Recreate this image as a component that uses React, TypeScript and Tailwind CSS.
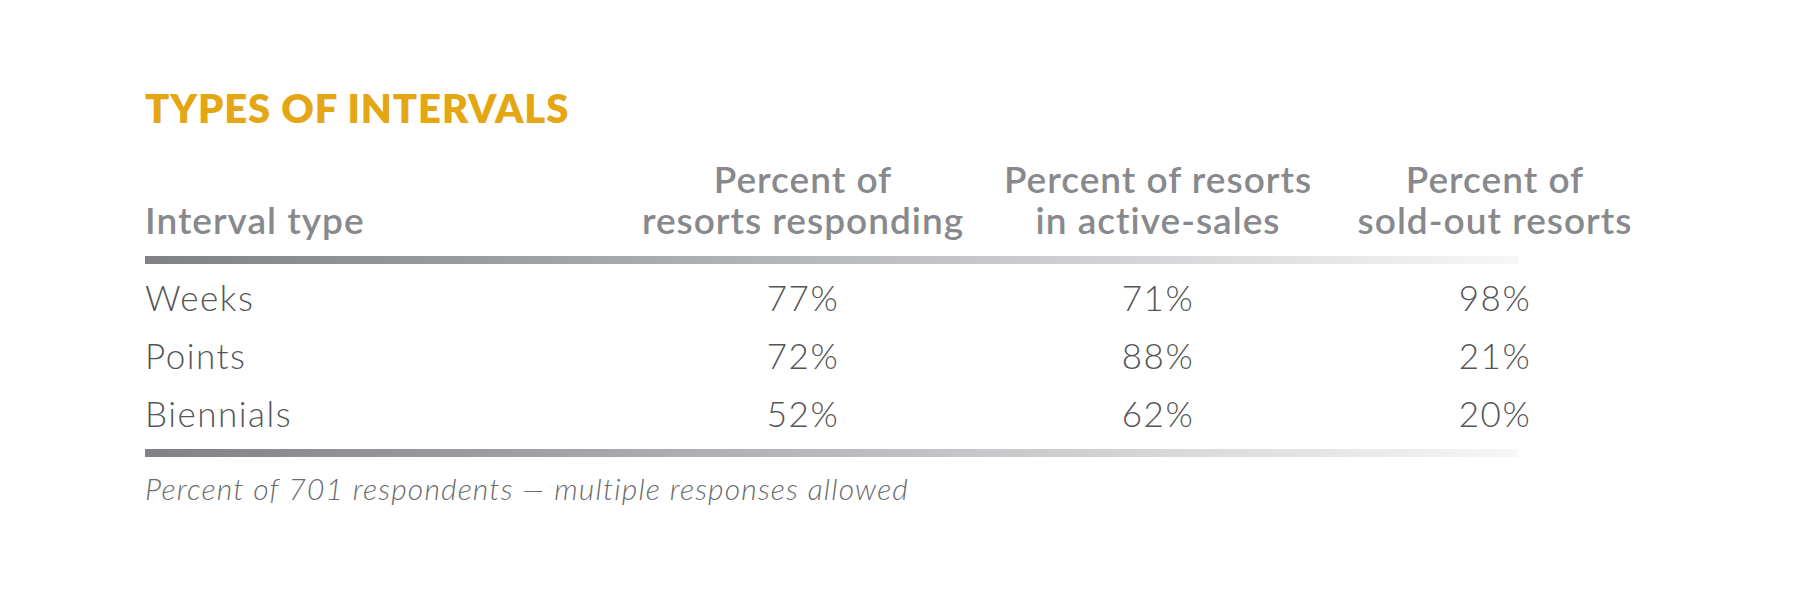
import React from 'react';

const rows = [
  { label: 'Weeks', values: ['77%', '71%', '98%'] },
  { label: 'Points', values: ['72%', '88%', '21%'] },
  { label: 'Biennials', values: ['52%', '62%', '20%'] },
];

const headers = [
  ['Percent of', 'resorts responding'],
  ['Percent of resorts', 'in active-sales'],
  ['Percent of', 'sold-out resorts'],
];

const Rule: React.FC = () => (
  <div className="h-[8px] w-[1373px] bg-linear-to-r from-[#808185] via-[#b9babd] to-[#f7f7f7]" />
);

const App: React.FC = () => {
  return (
    <div className="w-[1800px] h-[600px] bg-white pl-[145px] pt-[84px] font-['Lato','Liberation_Sans',sans-serif]">
      <h1 className="text-[40px] leading-[48px] font-extrabold text-[#e5a614] tracking-[0.9px]">
        TYPES OF INTERVALS
      </h1>

      {/* Header */}
      <div className="mt-[26px] grid grid-cols-[485px_346px_364px_310px] text-[37px] leading-[41px] font-semibold tracking-[1px] text-[#88898d]">
        <div className="self-end">Interval type</div>
        {headers.map((h) => (
          <div key={h[0] + h[1]} className="text-center">
            <div>{h[0]}</div>
            <div>{h[1]}</div>
          </div>
        ))}
      </div>

      <div className="mt-[16px]">
        <Rule />
      </div>

      {/* Body */}
      <div className="mt-[4px] text-[35px] leading-[58px] font-light tracking-[1.5px] text-[#545557]">
        {rows.map((r) => (
          <div key={r.label} className="grid grid-cols-[485px_346px_364px_310px]">
            <div>{r.label}</div>
            {r.values.map((v, i) => (
              <div key={i} className="text-center">
                {v}
              </div>
            ))}
          </div>
        ))}
      </div>

      <div className="mt-[7px]">
        <Rule />
      </div>

      <p className="mt-[13px] text-[30px] leading-[36px] font-light italic tracking-[1.15px] text-[#6a6b6e]">
        Percent of 701 respondents — multiple responses allowed
      </p>
    </div>
  );
};

export default App;
